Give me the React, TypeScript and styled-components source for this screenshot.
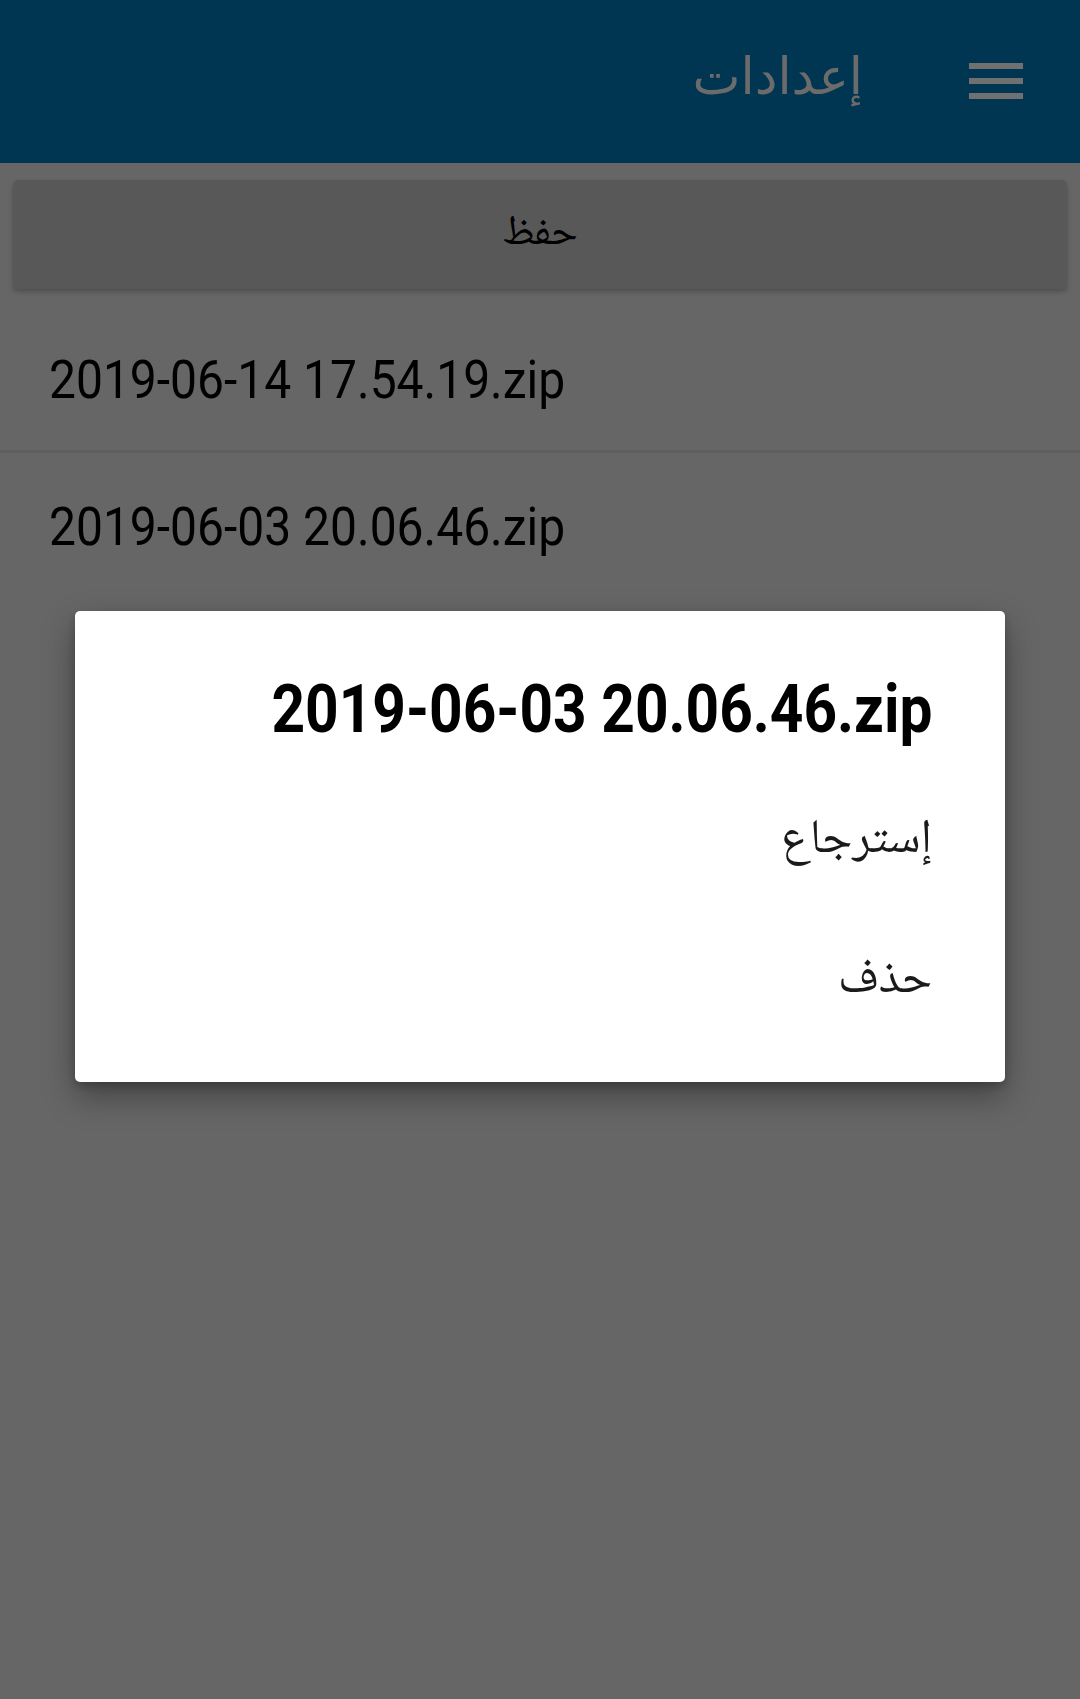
import React from 'react'
import styled, { createGlobalStyle } from 'styled-components'

const files = ['2019-06-14 17.54.19.zip', '2019-06-03 20.06.46.zip']
const actions = ['إسترجاع', 'حذف']

const GlobalStyle = createGlobalStyle`
    html, body {
        margin: 0;
        padding: 0;
        background: #666666;
    }
    body {
        font-family: "Noto Naskh Arabic", "Noto Sans Arabic", "DejaVu Sans", sans-serif;
    }
`

const App: React.FC = () => {
    return (
        <Page>
            <GlobalStyle />
            <Toolbar>
                <MenuButton aria-label="menu">
                    <svg width="54" height="36" viewBox="0 0 54 36">
                        <rect x="0" y="0" width="54" height="6" fill="#707070" />
                        <rect x="0" y="15" width="54" height="6" fill="#707070" />
                        <rect x="0" y="30" width="54" height="6" fill="#707070" />
                    </svg>
                </MenuButton>
                <Title>إعدادات</Title>
            </Toolbar>

            <SaveButton>حفظ</SaveButton>

            <FileList>
                {files.map(f => (
                    <FileItem key={f}>
                        <Narrow $scale={0.905}>{f}</Narrow>
                    </FileItem>
                ))}
            </FileList>

            <Scrim>
                <Dialog>
                    <DialogTitle>
                        <Narrow $scale={0.875} $origin="right">
                            2019-06-03 20.06.46.zip
                        </Narrow>
                    </DialogTitle>
                    {actions.map(a => (
                        <DialogItem key={a}>{a}</DialogItem>
                    ))}
                </Dialog>
            </Scrim>
        </Page>
    )
}

export default App

const Page = styled.div`
    direction: rtl;
    min-height: 1699px;
    background: #666666;
`

const Toolbar = styled.header`
    height: 163px;
    background: #003652;
    display: flex;
    align-items: center;
    padding-right: 57px;
    gap: 106px;
    box-sizing: border-box;
`

const MenuButton = styled.div`
    width: 54px;
    height: 36px;
    display: flex;
    margin-top: -2px;
    svg {
        display: block;
    }
`

const Title = styled.h1`
    margin: 0;
    font-family: "DejaVu Sans", "Noto Sans Arabic", sans-serif;
    font-weight: normal;
    font-size: 51px;
    color: #6b6b6b;
    line-height: 1;
    margin-top: -10px;
`

const SaveButton = styled.div`
    margin: 17px 13px;
    height: 109px;
    border-radius: 5px;
    background: #585858;
    box-shadow: 0 3px 5px rgba(0, 0, 0, 0.22);
    display: flex;
    align-items: center;
    justify-content: center;
    font-size: 42px;
    color: #000;
`

const FileList = styled.ul`
    list-style: none;
    margin: 0;
    padding: 0;
`

const FileItem = styled.li`
    direction: ltr;
    text-align: left;
    height: 147px;
    line-height: 148px;
    padding-left: 49px;
    box-sizing: border-box;
    font-family: Roboto, "Liberation Sans", sans-serif;
    font-size: 53px;
    color: #000;
    &:not(:last-child) {
        border-bottom: 3px solid #5e5e5e;
    }
`

const Narrow = styled.span<{ $scale: number; $origin?: string }>`
    display: inline-block;
    white-space: nowrap;
    transform: scaleX(${props => props.$scale});
    transform-origin: ${props => props.$origin || 'left'} center;
`

const Scrim = styled.div`
    position: fixed;
    inset: 0;
    display: flex;
    align-items: center;
    justify-content: center;
`

const Dialog = styled.div`
    width: 930px;
    height: 471px;
    margin-bottom: 6px;
    box-sizing: border-box;
    background: #ffffff;
    border-radius: 5px;
    box-shadow: 0 14px 32px rgba(0, 0, 0, 0.35), 0 4px 10px rgba(0, 0, 0, 0.2);
    padding: 60px 73px 30px;
    display: flex;
    flex-direction: column;
`

const DialogTitle = styled.div`
    direction: ltr;
    text-align: right;
    font-family: Roboto, "Liberation Sans", sans-serif;
    font-weight: bold;
    font-size: 67px;
    line-height: 76px;
    margin-bottom: 25px;
    color: #000;
`

const DialogItem = styled.div`
    height: 140px;
    line-height: 140px;
    font-size: 48px;
    color: #1a1a1a;
`
